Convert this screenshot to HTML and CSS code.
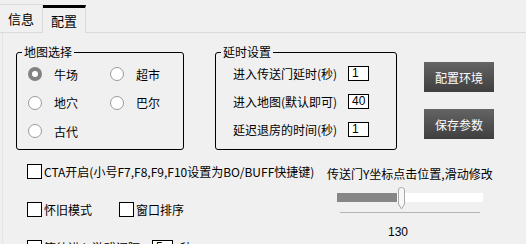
FILE: index.html
```html
<!DOCTYPE html>
<html lang="zh">
<head>
  <meta charset="UTF-8">
  <title>配置</title>
  <link rel="stylesheet" href="styles.css">
</head>
<body>

<div class="tabs">
  <div class="tab">信息</div>
  <div class="tab active">配置</div>
</div>

<div class="page">
  <div class="top">
    <fieldset class="group map">
      <legend>地图选择</legend>
      <div class="radios">
        <label class="radio"><span class="dot on"></span>牛场</label>
        <label class="radio"><span class="dot"></span>超市</label>
        <label class="radio"><span class="dot"></span>地穴</label>
        <label class="radio"><span class="dot"></span>巴尔</label>
        <label class="radio"><span class="dot"></span>古代</label>
      </div>
    </fieldset>

    <fieldset class="group delay">
      <legend>延时设置</legend>
      <div class="field"><span class="name">进入传送门延时(秒)</span><span class="box">1</span></div>
      <div class="field"><span class="name">进入地图(默认即可)</span><span class="box">40</span></div>
      <div class="field"><span class="name">延迟退房的时间(秒)</span><span class="box">1</span></div>
    </fieldset>

    <div class="actions">
      <button class="dark">配置环境</button>
      <button class="dark">保存参数</button>
    </div>
  </div>

  <div class="bottom">
    <div class="options">
      <div class="row"><span class="check"></span>CTA开启(小号F7,F8,F9,F10设置为BO/BUFF快捷键)</div>
      <div class="row"><span class="check"></span>怀旧模式<span class="check second"></span>窗口排序</div>
      <div class="row"><span class="check"></span>等待进入游戏间隔<span class="box small">5</span>秒</div>
    </div>

    <div class="slider">
      <div class="slider-label">传送门Y坐标点击位置,滑动修改</div>
      <div class="track">
        <div class="fill"></div>
        <svg class="thumb" width="9" height="23" viewBox="0 0 9 23">
          <path d="M1.5 3 Q1.5 0.5 4.5 0.5 Q7.5 0.5 7.5 3 L7.5 17 L4.5 22 L1.5 17 Z" fill="#f7f7f7" stroke="#a9a9a9" stroke-width="1"/>
        </svg>
      </div>
      <div class="tick"></div>
      <div class="value">130</div>
    </div>
  </div>
</div>

</body>
</html>
```

FILE: styles.css
```css
body {
  margin: 0;
  background: #f0f0f0;
  font-family: "Noto Sans CJK SC", "Noto Sans", sans-serif;
  font-size: 12px;
  color: #000;
  width: 526px;
  height: 244px;
  overflow: hidden;
}

.tabs {
  display: flex;
  align-items: flex-end;
  height: 32px;
  border-bottom: 1px solid #dadada;
}

.tab {
  box-sizing: border-box;
  width: 43px;
  height: 28px;
  border-top: 1px solid #dadada;
  border-right: 1px solid #dadada;
  text-align: center;
  line-height: 28px;
  font-size: 13px;
}

.tab.active {
  height: 28px;
  margin-bottom: -1px;
  height: 28px;
  border-top: 3px solid #000;
  background: #f0f0f0;
  line-height: 26px;
}

.page {
  height: 210px;
  margin-left: 2px;
  border-left: 1px solid #e4e4e4;
}

.top {
  display: flex;
  align-items: flex-start;
  padding-left: 13px;
  padding-top: 12px;
}

.group {
  box-sizing: border-box;
  margin: 0;
  padding: 0;
  height: 105px;
  border: 1px solid #000;
  border-radius: 3px;
}

.group legend {
  margin-left: 5px;
  padding: 0 2px;
  line-height: 14px;
  font-size: 12px;
}

.map {
  width: 168px;
}

.radios {
  display: grid;
  grid-template-columns: 82px 70px;
  grid-auto-rows: 28.5px;
  padding: 1px 0 0 11px;
}

.radio {
  display: flex;
  align-items: center;
  gap: 12px;
}

.dot {
  box-sizing: border-box;
  width: 14px;
  height: 14px;
  border-radius: 50%;
  border: 1px solid #9a9a9a;
  background: #fff;
}

.dot.on {
  border: 4px solid #828282;
}

.delay {
  width: 182px;
  margin-left: 31px;
}

.field {
  display: flex;
  align-items: center;
  height: 28px;
  padding-left: 17px;
}

.field .name {
  width: 115px;
}

.box {
  box-sizing: border-box;
  width: 21px;
  height: 15px;
  border: 1px solid #000;
  background: #fff;
  line-height: 13px;
  padding-left: 3px;
  font-family: "Liberation Sans", sans-serif;
  font-size: 12px;
}

.actions {
  display: flex;
  flex-direction: column;
  gap: 17px;
  margin-left: 27px;
  margin-top: 17px;
}

.dark {
  width: 70px;
  height: 30px;
  border: none;
  background: linear-gradient(#646464, #3f3f3f);
  color: #fff;
  font-family: "Noto Sans CJK SC", sans-serif;
  font-size: 12px;
  padding: 0;
}

.bottom {
  display: flex;
  align-items: flex-start;
}

.options {
  box-sizing: border-box;
  width: 324px;
  padding-left: 24px;
  margin-top: 13px;
  display: flex;
  flex-direction: column;
  gap: 22px;
}

.row {
  display: flex;
  align-items: center;
  height: 16px;
  white-space: nowrap;
}

.check {
  box-sizing: border-box;
  width: 15px;
  height: 15px;
  border: 1px solid #000;
  background: #fff;
  margin-right: 2px;
}

.check.second {
  margin-left: 27px;
}

.box.small {
  margin-left: 12px;
  margin-right: 7px;
}

.slider {
  margin-top: 16px;
  width: 180px;
}

.slider-label {
  line-height: 16px;
}

.track {
  position: relative;
  display: flex;
  width: 146px;
  height: 9px;
  margin: 11px 0 0 10px;
  background: #fff;
}

.fill {
  width: 60px;
  background: #868686;
}

.thumb {
  position: absolute;
  left: 60px;
  top: -6px;
}

.tick {
  width: 140px;
  height: 1px;
  margin: 10px 0 0 13px;
  background: #b4b4b4;
}

.value {
  margin: 11px 0 0 61px;
  line-height: 16px;
  font-family: "Liberation Sans", sans-serif;
}
```
